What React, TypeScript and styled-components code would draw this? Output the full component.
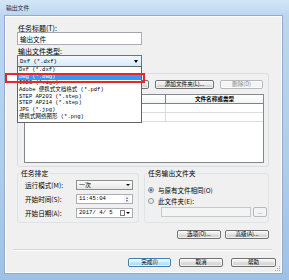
import React from "react";
import styled, { createGlobalStyle } from "styled-components";

const GlobalStyle = createGlobalStyle`
  html, body { margin: 0; padding: 0; }
  body {
    width: 289px; height: 280px; overflow: hidden; background: #fff;
    font-family: "Noto Sans CJK SC", "Noto Sans", sans-serif; color: #000;
  }
  * { box-sizing: border-box; }
`;

const MONO = `"Liberation Mono", "Noto Sans CJK SC", monospace`;

const Window = styled.div`
  width: 289px;
  height: 280px;
  display: flex;
  flex-direction: column;
  padding: 0 7px 7px 5px;
  background: linear-gradient(to bottom, #d3e6f8 0px, #bcd6f0 16px, #aecdec 60%, #9fc1e6 100%);
`;

const TitleBar = styled.div`
  height: 16px;
  flex: 0 0 16px;
  display: flex;
  align-items: center;
  padding-left: 1px;
  font-size: 5.8px;
  line-height: 8px;
  color: #1e2a3a;
`;

const Content = styled.div`
  flex: 1;
  position: relative;
  display: flex;
  flex-direction: column;
  background: #f0f0f0;
  border: 1px solid #fbfdff;
  box-shadow: 0 0 0 1px #90acce;
  padding: 7px 5px 0 7px;
`;

const Label = styled.div<{ $mt?: number }>`
  font-size: 7px;
  line-height: 8px;
  height: 8px;
  margin: ${(p) => p.$mt ?? 0}px 0 0 5px;
  white-space: nowrap;
`;

const TextBox = styled.div`
  width: 125px;
  height: 13px;
  margin-left: 4px;
  border: 1px solid #abadb3;
  border-top-color: #a0a3aa;
  background: #fff;
  display: flex;
  align-items: center;
  padding-left: 2px;
  font-size: 6.5px;
`;

const SelectWrap = styled.div`
  position: relative;
  width: 125px;
  height: 12px;
  margin-left: 4px;
`;

const SelectBox = styled.div`
  height: 100%;
  border: 1px solid #3c7fb1;
  background: linear-gradient(to bottom, #f4f9fe 0%, #e6f2fc 50%, #d6eafa 100%);
  display: flex;
  align-items: center;
  justify-content: space-between;
  padding: 0 3px 0 2px;
  font-family: ${MONO};
  font-size: 5.6px;
`;

const Arrow = styled.span`
  width: 0;
  height: 0;
  border-left: 2.5px solid transparent;
  border-right: 2.5px solid transparent;
  border-top: 3px solid #000;
`;

const DropList = styled.div`
  position: absolute;
  top: 100%;
  left: 0;
  width: 125px;
  margin-top: -1px;
  background: #fff;
  border: 1px solid #646464;
  padding-bottom: 1px;
  z-index: 5;
`;

const ListItem = styled.div<{ $active?: boolean }>`
  height: 6.7px;
  line-height: 6.7px;
  padding-left: 1px;
  font-family: ${MONO};
  font-size: 5.5px;
  white-space: nowrap;
  background: ${(p) => (p.$active ? "#3399ff" : "transparent")};
  color: ${(p) => (p.$active ? "#fff" : "#000")};
`;

const RedMark = styled.div`
  position: absolute;
  left: -12px;
  top: 18px;
  width: 140px;
  height: 10px;
  border: 2px solid #e8262b;
  background: linear-gradient(to right, #fff 10px, transparent 10px);
  z-index: 6;
`;

const Group = styled.div`
  margin: 6px 7px 0 4px;
  border: 1px solid #d5dfe5;
  border-radius: 3px;
  padding: 6px 4px 3px 6px;
  display: flex;
  flex-direction: column;
  gap: 5px;
`;

const ButtonRow = styled.div<{ $gap: number; $mt?: number; $mr?: number }>`
  display: flex;
  justify-content: flex-end;
  gap: ${(p) => p.$gap}px;
  margin-top: ${(p) => p.$mt ?? 0}px;
  margin-right: ${(p) => p.$mr ?? 0}px;
`;

const Button = styled.div<{ $w: number; $disabled?: boolean; $default?: boolean }>`
  width: ${(p) => p.$w}px;
  height: 9px;
  border: 1px solid ${(p) => (p.$disabled ? "#b5b9bc" : p.$default ? "#3c7fb1" : "#707070")};
  border-radius: 2px;
  background: ${(p) =>
    p.$disabled
      ? "#f4f4f4"
      : p.$default
      ? "linear-gradient(to bottom, #eaf6fd 0%, #d9f0fc 50%, #bee6fd 50%, #a7d9f5 100%)"
      : "linear-gradient(to bottom, #f2f2f2 0%, #ebebeb 50%, #dddddd 50%, #cfcfcf 100%)"};
  color: ${(p) => (p.$disabled ? "#8a8a8a" : "#000")};
  box-shadow: inset 0 0 0 1px rgba(255, 255, 255, 0.7);
  display: flex;
  align-items: center;
  justify-content: center;
  font-size: 5.6px;
  line-height: 7px;
  white-space: nowrap;
`;

const Table = styled.div`
  height: 69px;
  background: #fff;
  border: 1px solid #828790;
  display: grid;
  grid-template-columns: 141px 1fr;
  grid-auto-rows: 9px;
  grid-template-rows: 9px;
  align-content: start;
`;

const HeadCell = styled.div<{ $last?: boolean }>`
  height: 9px;
  border-bottom: 1px solid #7f8284;
  border-right: ${(p) => (p.$last ? "none" : "1px solid #7f8284")};
  background: linear-gradient(to bottom, #ffffff, #f3f4f6);
  display: flex;
  align-items: center;
  justify-content: center;
  font-size: 5.6px;
  font-weight: 700;
  line-height: 8px;
`;

const Cell = styled.div<{ $last?: boolean }>`
  border-bottom: 1px solid #dcdcdc;
  border-right: ${(p) => (p.$last ? "none" : "1px solid #dcdcdc")};
`;

const LowerRow = styled.div`
  display: flex;
  gap: 5px;
  margin: 6px 7px 0 4px;
`;

const GroupBox = styled.div<{ $w?: number }>`
  flex: ${(p) => (p.$w ? `0 0 ${p.$w}px` : "1")};
  border: 1px solid #dde3e8;
  border-radius: 3px;
  display: flex;
  flex-direction: column;
  align-items: flex-start;
  padding-bottom: 4px;
`;

const Caption = styled.div`
  margin: -5px 0 0 2px;
  padding: 0 1px;
  background: #f0f0f0;
  font-size: 6.8px;
  line-height: 8px;
  height: 8px;
  white-space: nowrap;
`;

const FieldGrid = styled.div`
  margin: 3px 0 0 7px;
  display: grid;
  grid-template-columns: 51px 57px;
  grid-auto-rows: 10px;
  row-gap: 4px;
  align-items: center;
`;

const FieldLabel = styled.div`
  font-size: 6.6px;
  line-height: 8px;
  white-space: nowrap;
`;

const Field = styled.div<{ $combo?: boolean }>`
  height: 10px;
  border: 1px solid ${(p) => (p.$combo ? "#8e8f8f" : "#abadb3")};
  background: ${(p) =>
    p.$combo ? "linear-gradient(to bottom, #fbfbfb 0%, #f1f1f1 50%, #e6e6e6 100%)" : "#fff"};
  display: flex;
  align-items: center;
  padding: 0 2px 0 2px;
  font-size: 6px;
  line-height: 8px;
  white-space: nowrap;
`;

const MonoText = styled.span`
  font-family: ${MONO};
  font-size: 5.6px;
`;

const Spacer = styled.span`
  flex: 1;
`;

const Spin = styled.div`
  width: 6px;
  height: 8px;
  display: flex;
  flex-direction: column;
  align-items: center;
  justify-content: center;
  gap: 1px;
  background: #f1f3f6;
`;

const TriUp = styled.span`
  width: 0; height: 0;
  border-left: 1.5px solid transparent;
  border-right: 1.5px solid transparent;
  border-bottom: 2px solid #5a6d86;
`;

const TriDown = styled.span`
  width: 0; height: 0;
  border-left: 1.5px solid transparent;
  border-right: 1.5px solid transparent;
  border-top: 2px solid #5a6d86;
`;

const SmallArrow = styled.span`
  width: 0; height: 0;
  border-left: 2px solid transparent;
  border-right: 2px solid transparent;
  border-top: 2.5px solid #000;
`;

const CalIcon = styled.span`
  width: 5px;
  height: 6px;
  border: 1px solid #7a7a7a;
  background: #fff;
  margin-right: 1px;
`;

const RadioRow = styled.div<{ $mt: number }>`
  display: flex;
  align-items: center;
  gap: 4px;
  margin: ${(p) => p.$mt}px 0 0 3px;
  height: 8px;
  font-size: 6.5px;
  line-height: 8px;
  white-space: nowrap;
`;

const Radio = styled.span<{ $checked?: boolean }>`
  width: 6px;
  height: 6px;
  border-radius: 50%;
  border: 1px solid #8e8f8f;
  background: ${(p) =>
    p.$checked
      ? "radial-gradient(circle, #2b6fb6 0, #4a94d8 1.3px, #eef3f8 1.8px)"
      : "radial-gradient(circle, #e6e6e6 0, #f8f8f8 3px)"};
`;

const FolderRow = styled.div`
  display: flex;
  gap: 2px;
  margin: 2px 0 0 16px;
`;

const FolderBox = styled.div`
  width: 90px;
  height: 10px;
  border: 1px solid #c6c8cc;
  background: #f4f4f4;
`;

const DotsButton = styled.div`
  width: 14px;
  height: 10px;
  border: 1px solid #b5b9bc;
  border-radius: 2px;
  background: #f4f4f4;
  color: #8a8a8a;
  font-size: 5.5px;
  display: flex;
  align-items: center;
  justify-content: center;
  line-height: 6px;
`;

const Separator = styled.div`
  margin: 10px 4px 0 0;
  height: 2px;
  border-top: 1px solid #d5d5d5;
  border-bottom: 1px solid #ffffff;
`;

const Grip = styled.svg`
  position: absolute;
  right: 0;
  bottom: 0;
`;

const items = [
  "Dxf (*.dxf)",
  "Dwg (*.dwg)",
  "IGES (*.igs)",
  "Adobe 便携式文档格式 (*.pdf)",
  "STEP AP203 (*.step)",
  "STEP AP214 (*.step)",
  "JPG (*.jpg)",
  "便携式网络图形 (*.png)",
];

export default function App() {
  return (
    <>
      <GlobalStyle />
      <Window>
        <TitleBar>输出文件</TitleBar>
        <Content>
          <Label>任务标题(T):</Label>
          <TextBox>输出文件</TextBox>
          <Label $mt={2}>输出文件类型:</Label>
          <SelectWrap>
            <SelectBox>
              <span>Dxf (*.dxf)</span>
              <Arrow />
            </SelectBox>
            <DropList>
              {items.map((t, i) => (
                <ListItem key={t} $active={i === 1}>
                  {t}
                </ListItem>
              ))}
            </DropList>
            <RedMark />
          </SelectWrap>

          <Group>
            <ButtonRow $gap={6} $mr={1}>
              <Button $w={55}>添加文件(F)...</Button>
              <Button $w={59}>添加文件夹(L)...</Button>
              <Button $w={43} $disabled>
                删除(D)
              </Button>
            </ButtonRow>
            <Table>
              <HeadCell>文件名称</HeadCell>
              <HeadCell $last>文件名称或类型</HeadCell>
              <Cell />
              <Cell $last />
              <Cell />
              <Cell $last />
            </Table>
          </Group>

          <LowerRow>
            <GroupBox $w={122}>
              <Caption>任务排定</Caption>
              <FieldGrid>
                <FieldLabel>运行模式(M):</FieldLabel>
                <Field $combo>
                  一次
                  <Spacer />
                  <SmallArrow />
                </Field>
                <FieldLabel>开始时间(S):</FieldLabel>
                <Field>
                  <MonoText>11:45:04</MonoText>
                  <Spacer />
                  <Spin>
                    <TriUp />
                    <TriDown />
                  </Spin>
                </Field>
                <FieldLabel>开始日期(A):</FieldLabel>
                <Field>
                  <MonoText>2017/ 4/ 5</MonoText>
                  <Spacer />
                  <CalIcon />
                  <SmallArrow />
                </Field>
              </FieldGrid>
            </GroupBox>
            <GroupBox>
              <Caption>任务输出文件夹</Caption>
              <RadioRow $mt={9}>
                <Radio $checked />
                与原有文件相同(O)
              </RadioRow>
              <RadioRow $mt={3}>
                <Radio />
                此文件夹(E):
              </RadioRow>
              <FolderRow>
                <FolderBox />
                <DotsButton>...</DotsButton>
              </FolderRow>
            </GroupBox>
          </LowerRow>

          <ButtonRow $gap={4} $mt={7} $mr={7}>
            <Button $w={44}>选项(O)...</Button>
            <Button $w={44}>高级(A)...</Button>
          </ButtonRow>

          <Separator />

          <ButtonRow $gap={8} $mt={7}>
            <Button $w={43} $default>
              完成(I)
            </Button>
            <Button $w={44}>取消</Button>
            <Button $w={45}>帮助</Button>
          </ButtonRow>

          <Grip width="7" height="7" viewBox="0 0 7 7">
            <rect x="5" y="1" width="1" height="1" fill="#9aa5b3" />
            <rect x="3" y="3" width="1" height="1" fill="#9aa5b3" />
            <rect x="5" y="3" width="1" height="1" fill="#9aa5b3" />
            <rect x="1" y="5" width="1" height="1" fill="#9aa5b3" />
            <rect x="3" y="5" width="1" height="1" fill="#9aa5b3" />
            <rect x="5" y="5" width="1" height="1" fill="#9aa5b3" />
          </Grip>
        </Content>
      </Window>
    </>
  );
}
